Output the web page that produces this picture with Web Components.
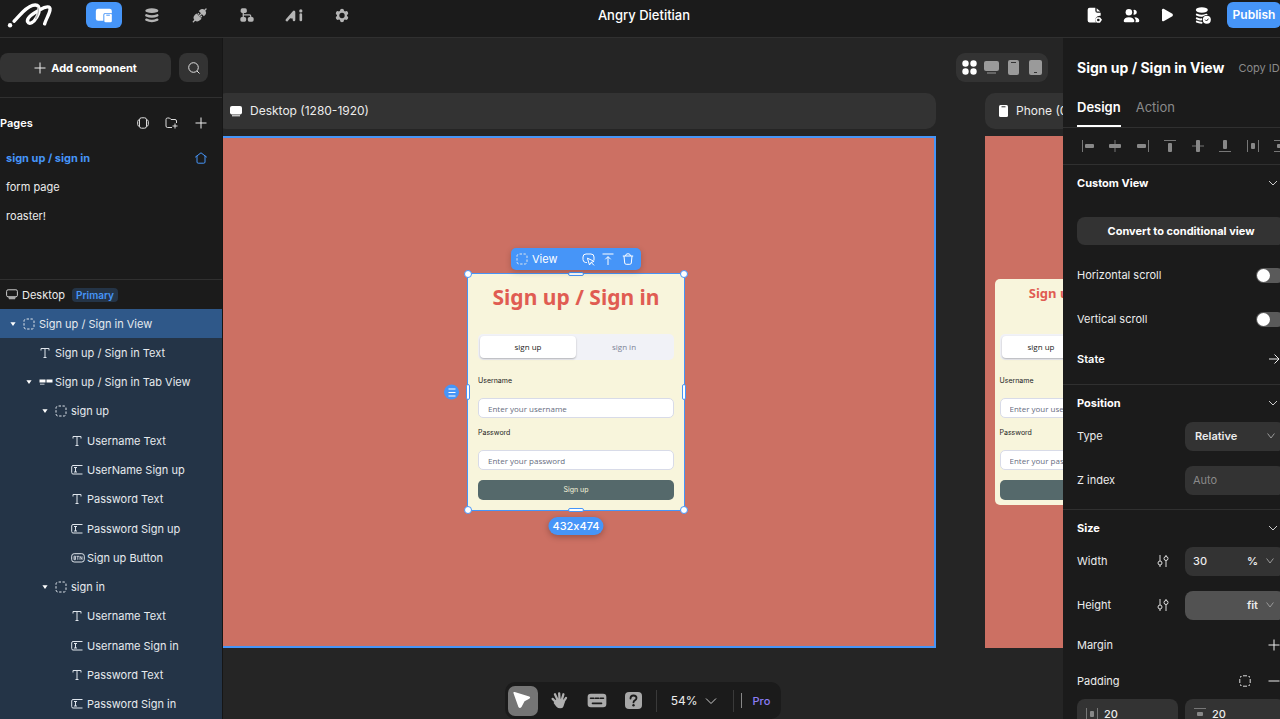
<!DOCTYPE html>
<html lang="en">
<head>
<meta charset="utf-8">
<title>Angry Dietitian</title>
<style>
  html, body { margin: 0; height: 100%; }
  body {
    overflow: hidden; background: #252525; color: #ececec;
    font: 400 11px/16px Inter, "Liberation Sans", sans-serif;
    --panel: #1b1b1b; --line: #303030; --field: #333; --accent: #4695f8;
  }
</style>
</head>
<body>
<builder-app></builder-app>
<script>
const ICONS = {
  logo: ['20 5 140 80', 47, 27, '<g fill="none" stroke="#fff" stroke-width="10" stroke-linecap="round" stroke-linejoin="round"><path d="M41 62C57 47 73 22 96 15C120 8 120 31 108 51C100 66 86 73 81 63C78 51 101 37 118 28C135 18 151 15 148 29C146 41 136 57 132 70"/></g><path d="M110 20C117 27 112 43 105 55" stroke="#bbb" stroke-width="4" fill="none"/><circle cx="29" cy="74" r="6.500" fill="#fff"/>'],
  screens: ['286 25 54 46', 18, 15, '<rect x="288" y="27" width="49" height="37" rx="7" fill="#fff"/><rect x="311" y="40" width="29" height="31" rx="6" fill="#4695f8"/><rect x="314" y="43" width="23" height="26" rx="4" fill="#fff"/><path d="M320 47h11" stroke="#4695f8" stroke-width="3"/>'],
  data: ['434 23 42 45', 14, 15, '<ellipse cx="454.500" cy="31" rx="19.500" ry="7" fill="#b4b4b4"/><path d="M438 45q16.500 7 33 0M438 58q16.500 8 33 0" stroke="#b4b4b4" stroke-width="7" stroke-linecap="round" fill="none"/>'],
  plug: ['574 23 45 45', 15, 15, '<g transform="rotate(-45 597 45)" fill="#b4b4b4"><rect x="568" y="43" width="58" height="4" rx="2"/><path d="M588 34h6v22h-6q-12 0-12-11t12-11zM604 34h3q12 0 12 11t-12 11h-3z"/><path d="M594 39h6M594 51h6" stroke="#b4b4b4" stroke-width="4"/></g>'],
  flow: ['718 24 43 43', 14, 14, '<g fill="#b4b4b4"><rect x="720" y="25" width="19" height="14" rx="5"/><rect x="719" y="52" width="18" height="14" rx="5"/><rect x="742" y="52" width="18" height="14" rx="5"/></g><path d="M728 38v15M728 45h19q4 0 4 4v5" fill="none" stroke="#b4b4b4" stroke-width="4"/>'],
  ai: ['856 25 54 40', 18, 13, '<path d="M861 59L883 34V59M875 50l8 0" fill="none" stroke="#b4b4b4" stroke-width="8" stroke-linecap="round" stroke-linejoin="round"/><path d="M904 42V59" stroke="#b4b4b4" stroke-width="8" stroke-linecap="round"/><circle cx="904" cy="31" r="5" fill="#b4b4b4"/>'],
  gear: ['1003 23 42 44', 14, 15, '<g stroke="#b4b4b4" stroke-width="12" stroke-linecap="round"><path d="M1024 31v28M1011.500 38l25 14M1011.500 52l25-14"/></g><circle cx="1024" cy="45" r="15" fill="#b4b4b4"/><circle cx="1024" cy="45" r="8" fill="#1b1b1b"/>'],
  docgear: ['440 20 48 50', 16, 17, '<path d="M448 22h17v9q0 6 6 6h10v9q-9-1-14 5-5 8 0 15h-19q-6 0-6-6V28q0-6 6-6zM469 23l11 10h-11z" fill="#fff"/><path d="M469 50h10l6 8-6 9h-10l-5-9z" fill="#fff"/><circle cx="474" cy="58.500" r="4" fill="#1b1b1b"/>'],
  users: ['545 22 52 46', 17, 15, '<g fill="#fff"><circle cx="563" cy="35" r="10"/><path d="M577 28a7.500 7.500 0 1 1 0 14q3-7 0-14zM547 62q1-12 16-12t17 12q0 4-5 4h-23q-5 0-5-4zM580 50q14 0 15 11 0 5-5 5h-7q3-9-3-16z"/></g>'],
  play: ['664 24 40 42', 13, 14, '<path d="M667 30q0-5 5-4L699 41q4 4 0 8L672 64q-5 2-5-3z" fill="#fff"/>'],
  dbcheck: ['765 18 50 51', 17, 17, '<ellipse cx="785" cy="27" rx="18" ry="8" fill="#fff"/><path d="M770 41q14 7 29 0M770 52q8 4 15 3M770 62q6 3 14 3" stroke="#fff" stroke-width="6" stroke-linecap="round" fill="none"/><circle cx="800" cy="56" r="14" fill="#1b1b1b"/><circle cx="800" cy="56" r="12" fill="#fff"/><path d="M795 56l4 4 6-7" fill="none" stroke="#1b1b1b" stroke-width="3"/>'],
  plus: ['0 0 12 12', 12, 12, '<path d="M6 .5v11M.5 6h11" stroke="#eee" fill="none"/>'],
  minus: ['0 0 12 12', 12, 12, '<path d="M.5 6h11" stroke="#eee" fill="none"/>'],
  search: ['0 0 12 12', 12, 12, '<circle cx="5.500" cy="5.500" r="4.800" fill="none" stroke="#e0e0e0"/><path d="M9 9l2.500 2.500" stroke="#e0e0e0"/>'],
  panel: ['0 0 12 12', 12, 12, '<rect x="2.500" y=".8" width="7" height="10.400" rx="2" fill="none" stroke="#ddd"/><path d="M2.500 2.500Q.7 3 .7 4.500v3q0 1.500 1.800 2M9.500 2.500q1.800.5 1.800 2v3q0 1.500-1.800 2" fill="none" stroke="#ddd"/>'],
  folder: ['0 0 13 12', 13, 12, '<path d="M7 10.500H2.500q-1.500 0-1.500-1.500V2.500Q1 1 2.500 1h2l1.500 1.500h4q1.500 0 1.500 1.500v2M10 6.500v5M7.500 9h5" fill="none" stroke="#ddd"/>'],
  home: ['0 0 12 12', 12, 12, '<path d="M.5 5L6 .8 11.500 5M2 4.200V10q0 1.200 1.200 1.200h5.600Q10 11.200 10 10V4.200" fill="none" stroke="#4695f8" stroke-linejoin="round" stroke-linecap="round"/>'],
  monitor: ['0 0 12 11', 12, 11, '<rect x=".6" y=".8" width="10.800" height="7" rx="1.500" fill="none" stroke="#ccc"/><path d="M2 7.500h8l-1 2.800H3z" fill="#aaa"/>'],
  caret: ['0 0 6 6', 6, 6, '<path d="M.4 1.200h5.200L3 5z" fill="#fff"/>'],
  view: ['0 0 12 12', 12, 12, '<rect x="1" y="1" width="10" height="10" rx="2" fill="none" stroke="#dfe5ec" stroke-dasharray="2.400 1.500" stroke-dashoffset="-.6"/>'],
  text: ['0 0 12 12', 12, 12, '<path d="M2 3.500V1.500h8v2M6 1.500v9M4.500 10.500h3" fill="none" stroke="#dfe5ec"/>'],
  tabs: ['0 0 14 12', 14, 12, '<path d="M.5 3.500h6v3h-6zM7.500 3.500h6v3h-6z" fill="#fff"/><path d="M1 8.200h4.500" stroke="#c5ccd4"/>'],
  input: ['0 0 12 12', 12, 12, '<path d="M11.500 1.500H2Q.7 1.500.7 3v5.500q0 1.500 1.300 1.500h9.500M3 3.500h3M3 8h3M4.500 3.500V8" fill="none" stroke="#dfe5ec"/>'],
  btn: ['0 0 14 12', 14, 12, '<rect x=".7" y="1.700" width="12.600" height="8.300" rx="2.500" fill="none" stroke="#dfe5ec"/><path d="M3 4.200v3.500h1.500v-3.500zM3 6h1.500M5.500 4.300h2.500M6.800 4.300v3.500M9 7.800V4.300l2 3.200V4.300" fill="none" stroke="#dfe5ec" stroke-width=".8"/>'],
  grid4: ['0 0 15 15', 15, 15, '<g fill="#fff"><circle cx="3.500" cy="3.500" r="3.200"/><circle cx="11.500" cy="3.500" r="3.200"/><circle cx="3.500" cy="11.500" r="3.200"/><circle cx="11.500" cy="11.500" r="3.200"/></g>'],
  dDesk: ['0 0 15 15', 15, 15, '<rect y="1" width="15" height="10" rx="2" fill="#9a9a9a"/><path d="M3 13h9" stroke="#777" stroke-width="1.500"/>'],
  dPhone: ['0 0 11 15', 11, 15, '<rect width="11" height="15" rx="2" fill="#9a9a9a"/><path d="M3 2.500h5" stroke="#333"/>'],
  dTab: ['0 0 13 15', 13, 15, '<rect width="13" height="15" rx="2" fill="#9a9a9a"/><path d="M5 12.500h3" stroke="#333"/>'],
  fDesk: ['0 0 12 12', 12, 12, '<rect y="1" width="12" height="8.500" rx="2" fill="#fff"/><path d="M2 10.800h8" stroke="#fff"/>'],
  fPhone: ['0 0 9 12', 9, 12, '<rect width="9" height="12" rx="1.500" fill="#fff"/><path d="M2.500 1.800h4" stroke="#333"/>'],
  chev: ['0 0 10 10', 10, 10, '<path d="M1 3l4 4 4-4" fill="none" stroke="#ccc"/>'],
  chevDim: ['0 0 8 10', 8, 10, '<path d="M.6 2.500L4 7l3.400-4.500" fill="none" stroke="#999"/>'],
  arrow: ['0 0 12 12', 12, 12, '<path d="M1 6h10M6.500 1.500L11 6l-4.500 4.500" fill="none" stroke="#eee"/>'],
  tune: ['0 0 12 12', 12, 12, '<g fill="none" stroke="#ddd"><path d="M3 0v6M3 10v2M9 0v1.500M9 5.500V12"/><circle cx="3" cy="8" r="2"/><circle cx="9" cy="3.500" r="2"/></g>'],
  corners: ['0 0 12 12', 12, 12, '<path d="M4 .8h4M4 11.200h4M.8 4v4M11.200 4v4M1.500 2.500V1.500h1M9.500 1.500h1v1M1.500 9.500v1h1M9.500 10.500h1v-1" fill="none" stroke="#ddd"/>'],
  aL: ['0 0 12 12', 12, 12, '<path d="M.5 0v12" stroke="#777"/><rect x="3" y="4" width="9" height="4" rx="1" fill="#888"/>'],
  aC: ['0 0 12 12', 12, 12, '<path d="M6 0v12" stroke="#777"/><rect x="0" y="4" width="12" height="4" rx="1" fill="#888"/>'],
  aR: ['0 0 12 12', 12, 12, '<path d="M11.500 0v12" stroke="#777"/><rect x="0" y="4" width="9" height="4" rx="1" fill="#888"/>'],
  aT: ['0 0 12 12', 12, 12, '<path d="M0 .5h12" stroke="#777"/><rect x="4" y="3" width="4" height="9" rx="1" fill="#888"/>'],
  aM: ['0 0 12 12', 12, 12, '<path d="M0 6h12" stroke="#777"/><rect x="4" y="0" width="4" height="12" rx="1" fill="#888"/>'],
  aB: ['0 0 12 12', 12, 12, '<path d="M0 11.500h12" stroke="#777"/><rect x="4" y="0" width="4" height="9" rx="1" fill="#888"/>'],
  aH: ['0 0 12 12', 12, 12, '<path d="M.5 0v12M11.500 0v12" stroke="#777"/><rect x="4" y="3" width="4" height="6" rx="1" fill="#888"/>'],
  aV: ['0 0 12 12', 12, 12, '<path d="M0 .5h12M0 11.500h12" stroke="#777"/><rect x="3" y="4" width="6" height="4" rx="1" fill="#888"/>'],
  comment: ['0 0 13 13', 13, 13, '<path d="M4.500 9.500H3.500Q1 9 1 6.500V4Q1 1 4 1h5q3 0 3 3v3M5.500 5.500l2 6.500 1.500-2.500 2.700-1zM9.200 9.500l2.600 2.600" fill="none" stroke="#fff" stroke-linejoin="round" stroke-linecap="round"/>'],
  up: ['0 0 12 12', 12, 12, '<path d="M.5 1h11M6 12V3.800M3.300 6.300L6 3.600l2.700 2.700" fill="none" stroke="#fff"/>'],
  trash: ['0 0 12 12', 12, 12, '<path d="M.8 3h10.400M3.500 3q0-2.300 2.500-2.300T8.500 3M2 3l.7 7q.2 1.300 1.500 1.300h3.600q1.300 0 1.500-1.300L10 3" fill="none" stroke="#fff"/>'],
  list: ['0 0 8 10', 8, 10, '<path d="M.5 1.500h7M.5 5h7M.5 8.500h7" stroke="#fff"/>'],
  cursor: ['72 50 56 56', 19, 19, '<path d="M73 55q0-3 4-2L120 66q5 2 0 7L106 80 97 97q-5 6-9 0z" fill="#fff"/>'],
  hand: ['182 52 52 52', 17, 17, '<g stroke="#b0b0b0" stroke-width="7" stroke-linecap="round" fill="none"><path d="M198 84L187 73M202 76L194 59M208 74L207 56M215 76L220 59M220 82L228 70"/></g><path d="M196 76q12-7 26 0l2 8-4 12q-2 6-10 6-7 0-12-6l-8-10z" fill="#b0b0b0"/>'],
  keys: ['286 54 62 46', 20, 15, '<rect x="288" y="56" width="58" height="42" rx="10" fill="#aaa"/><path d="M297 70h10M312 70h10M327 70h10M303 86h28" stroke="#1b1b1b" stroke-width="5" stroke-linecap="round"/>'],
  help: ['0 0 17 17', 17, 17, '<rect width="17" height="17" rx="4" fill="#a8a8a8"/><path d="M5.500 6.500q0-3 3-3t3 2.600q0 1.500-1.600 2.300-1.400.8-1.400 2" fill="none" stroke="#1b1b1b" stroke-width="1.800" stroke-linecap="round"/><circle cx="8.500" cy="13.300" r="1.200" fill="#1b1b1b"/>'],
  zoomchev: ['0 0 12 12', 12, 12, '<path d="M1 3.500l5 5 5-5" fill="none" stroke="#ccc"/>']
};

class BaseElement extends HTMLElement {
  connectedCallback() {
    if (this.shadowRoot) return;
    const root = this.attachShadow({ mode: 'open' });
    root.innerHTML = '<style>*{box-sizing:border-box}h1,h2,h3,p,ul,li{margin:0;padding:0;list-style:none;font-size:inherit}button,input,select{font:inherit;color:inherit;border:0;margin:0;padding:0;background:none;appearance:none;outline:0;min-width:0}button{display:flex;align-items:center;justify-content:center}a{color:inherit;text-decoration:none}</style>' + this.render();
  }
}

customElements.define('ui-icon', class extends BaseElement {
  render() {
    const [box, w, h, art] = ICONS[this.getAttribute('name')];
    return `<style>:host{display:inline-flex;flex:none}svg{display:block}</style><svg viewBox="${box}" width="${w}" height="${h}" aria-hidden="true">${art}</svg>`;
  }
});

customElements.define('top-bar', class extends BaseElement {
  render() {
    const tools = [['screens', 'Editor'], ['data', 'Data'], ['plug', 'Integrations'], ['flow', 'Actionflow'], ['ai', 'Assistant'], ['gear', 'Settings']];
    const right = [['docgear', 'Page settings'], ['users', 'Collaborators'], ['play', 'Preview'], ['dbcheck', 'Sync']];
    return `<style>
      :host{display:grid;grid-template-columns:1fr auto 1fr;width:calc(100% + 5px);height:38px;padding:2px 4px 9px 7px;background:var(--panel);border-bottom:1px solid var(--line);box-sizing:border-box}
      .left,.right{display:flex;height:26px;align-items:center}
      .right{justify-content:flex-end}
      nav{display:flex;justify-content:space-between;width:274px;margin-left:32px}
      nav button{width:36px;height:26px;border-radius:6px}
      nav button.on{background:var(--accent)}
      .right .ic{width:36px;height:26px}
      .pub{height:26px;width:54px;margin-left:6px;border-radius:6px;background:var(--accent);color:#fff;font-size:12px;font-weight:600}
      h1{font-size:13px;font-weight:500;line-height:26px;color:#fff}
    </style>
    <div class="left"><ui-icon name="logo"></ui-icon><nav>${tools.map(([n, l], i) => `<button class="${i ? '' : 'on'}" aria-label="${l}"><ui-icon name="${n}"></ui-icon></button>`).join('')}</nav></div>
    <h1>Angry Dietitian</h1>
    <div class="right">${right.map(([n, l]) => `<button class="ic" aria-label="${l}"><ui-icon name="${n}"></ui-icon></button>`).join('')}<button class="pub">Publish</button></div>`;
  }
});

customElements.define('tree-row', class extends BaseElement {
  render() {
    const level = this.getAttribute('level');
    return `<style>
      :host{display:flex;align-items:center;padding-left:calc(${level} * 16px + 10px);white-space:nowrap}
      :host([selected]){background:#2f5889}
      .caret{width:13px;display:flex}
      .kind{width:16px;display:flex}
    </style><span class="caret">${this.hasAttribute('open') ? '<ui-icon name="caret"></ui-icon>' : ''}</span><span class="kind"><ui-icon name="${this.getAttribute('icon')}"></ui-icon></span><slot></slot>`;
  }
});

customElements.define('side-panel', class extends BaseElement {
  render() {
    const rows = [[0, 'view', 'Sign up / Sign in View', 'open selected'], [1, 'text', 'Sign up / Sign in Text'], [1, 'tabs', 'Sign up / Sign in Tab View', 'open'], [2, 'view', 'sign up', 'open'], [3, 'text', 'Username Text'], [3, 'input', 'UserName Sign up'], [3, 'text', 'Password Text'], [3, 'input', 'Password Sign up'], [3, 'btn', 'Sign up Button'], [2, 'view', 'sign in', 'open'], [3, 'text', 'Username Text'], [3, 'input', 'Username Sign in'], [3, 'text', 'Password Text'], [3, 'input', 'Password Sign in']];
    return `<style>
      :host{display:flex;flex-direction:column;flex:0 0 223px;min-height:0;overflow:hidden;background:var(--panel);border-right:1px solid #161616;box-sizing:border-box}
      .add{display:flex;gap:8px;padding:15px 14px 15px 0;border-bottom:1px solid var(--line)}
      .add button{height:29px;border-radius:8px;background:var(--field)}
      .add .main{flex:1;gap:5px;font-weight:700;color:#fff}
      .add .find{width:29px}
      .pages{flex:0 0 182px;padding-top:10px;border-bottom:1px solid var(--line)}
      .head{display:flex;height:29px;align-items:center;padding-right:7px;margin-bottom:6px}
      .head h2{flex:1;font-weight:600;color:#fff}
      .head button{width:29px;height:29px}
      li a{display:flex;height:29px;align-items:center;justify-content:space-between;padding:0 15px 0 6px}
      li .on{color:var(--accent);font-weight:700}
      .device{display:flex;flex:0 0 29px;align-items:center;gap:4px;padding-left:6px}
      .tag{margin-left:3px;padding:0 4px;border-radius:4px;background:#243447;color:var(--accent);font-size:10px;font-weight:600;line-height:14px}
      .tree{display:grid;flex:1;grid-auto-rows:minmax(29px,1fr);background:#243447;color:#e6eaee}
    </style>
    <div class="add"><button class="main"><ui-icon name="plus"></ui-icon>Add component</button><button class="find" aria-label="Search"><ui-icon name="search"></ui-icon></button></div>
    <section class="pages"><div class="head"><h2>Pages</h2><button aria-label="Layouts"><ui-icon name="panel"></ui-icon></button><button aria-label="New folder"><ui-icon name="folder"></ui-icon></button><button aria-label="New page"><ui-icon name="plus"></ui-icon></button></div>
    <ul><li><a class="on" href="#signup">sign up / sign in<ui-icon name="home"></ui-icon></a></li><li><a href="#form">form page</a></li><li><a href="#roaster">roaster!</a></li></ul></section>
    <div class="device"><ui-icon name="monitor"></ui-icon>Desktop<span class="tag">Primary</span></div>
    <div class="tree">${rows.map(([l, i, t, a = '']) => `<tree-row level="${l}" icon="${i}" ${a}>${t}</tree-row>`).join('')}</div>`;
  }
});

customElements.define('signup-card', class extends BaseElement {
  render() {
    return `<style>
      :host{display:block;width:var(--card-width,216px);padding:var(--card-pad,10px);background:#f8f5dc;border-radius:var(--card-radius,0);box-sizing:border-box;font:8px/10px "Open Sans","Noto Sans",sans-serif;color:#1c1c1c}
      h2{font:700 var(--title-size,21px)/var(--title-line,26px) "Noto Sans",sans-serif;color:#e05c52;text-align:center;white-space:nowrap;margin-bottom:var(--title-gap,24px)}
      .tabs{display:flex;height:26px;padding:2px;border-radius:5px;background:#f1f2f7;margin-bottom:16px}
      .tabs button{flex:1;color:#7d8296;border-radius:4px}
      .tabs .on{background:#fff;color:#1c1c1c;box-shadow:0 1px 2px #0004}
      label{display:block;height:10px;margin-bottom:12px;font-size:7px;font-family:Inter,sans-serif}
      input{display:block;width:100%;height:20px;padding:0 9px;background:#fff;border:1px solid #d8dbe8;border-radius:5px;margin-bottom:10px;color:#666c80}
      input::placeholder{color:#666c80}
      .go{width:100%;height:20px;border-radius:5px;background:#55696b;color:#f8f5dc;font:7px/10px Inter,sans-serif}
    </style>
    <h2>Sign up / Sign in</h2>
    <div class="tabs"><button class="on">sign up</button><button>sign in</button></div>
    <label for="u">Username</label><input id="u" placeholder="Enter your username">
    <label for="p">Password</label><input id="p" placeholder="Enter your password">
    <button class="go">Sign up</button>`;
  }
});

customElements.define('selection-box', class extends BaseElement {
  render() {
    return `<style>
      :host{display:block;position:relative;outline:1px solid var(--accent)}
      i{position:absolute;box-sizing:border-box;background:#fff;border:1px solid var(--accent);transform:translate(-50%,-50%)}
      .c{width:8px;height:8px;border-radius:4px}
      .h{width:16px;height:4px;border-radius:2px}
      .v{width:4px;height:16px;border-radius:2px}
      .bar{position:absolute;bottom:calc(100% + 4px);left:50%;transform:translateX(-50%);display:flex;align-items:center;width:130px;height:22px;padding:0 3px 0 5px;border-radius:5px;background:var(--accent);color:#fff;box-shadow:0 2px 6px #0003}
      .bar span{flex:1;padding-left:4px}
      .bar button{width:20px;height:20px}
      .size{position:absolute;top:calc(100% + 7px);left:50%;transform:translateX(-50%);padding:0 4px;border-radius:9px;background:var(--accent);color:#fff;font-weight:500;line-height:18px;font-feature-settings:"calt" 0;box-shadow:0 2px 6px #0004}
      .menu{position:absolute;left:-24px;top:50%;transform:translateY(-50%);width:15px;height:15px;border-radius:50%;background:var(--accent)}
    </style><slot></slot>
    <i class="c" style="left:0;top:0"></i><i class="c" style="left:100%;top:0"></i><i class="c" style="left:0;top:100%"></i><i class="c" style="left:100%;top:100%"></i>
    <i class="h" style="left:50%;top:0"></i><i class="h" style="left:50%;top:100%"></i><i class="v" style="left:0;top:50%"></i><i class="v" style="left:100%;top:50%"></i>
    <div class="bar"><ui-icon name="view"></ui-icon><span>View</span><button aria-label="Comment"><ui-icon name="comment"></ui-icon></button><button aria-label="Select parent"><ui-icon name="up"></ui-icon></button><button aria-label="Delete"><ui-icon name="trash"></ui-icon></button></div>
    <button class="menu" aria-label="Menu"><ui-icon name="list"></ui-icon></button>
    <div class="size">432x474</div>`;
  }
});

customElements.define('art-board', class extends BaseElement {
  render() {
    return `<style>
      :host{display:flex;flex-direction:column;gap:7px;flex:0 0 var(--board-width)}
      header{display:flex;align-items:center;gap:8px;height:36px;padding:0 14px;border-radius:10px;background:var(--field);font-size:12px;white-space:nowrap}
      .page{display:flex;flex:1;align-items:center;justify-content:center;background:#cc7063;border:2px solid transparent}
      :host([active]) .page{border-color:var(--accent)}
    </style><header><ui-icon name="${this.getAttribute('icon')}"></ui-icon>${this.getAttribute('label')}</header><div class="page"><slot></slot></div>`;
  }
});

customElements.define('design-canvas', class extends BaseElement {
  render() {
    return `<style>
      :host{display:flex;flex-direction:column;flex:1;min-width:0;overflow:hidden;padding-top:15px;box-sizing:border-box}
      .devices{display:flex;align-self:flex-end;align-items:center;height:29px;margin-right:15px;padding:0 2px;border-radius:9px;background:var(--field)}
      .devices button{width:22px;height:29px}
      .boards{display:flex;flex:1;gap:49px;margin:11px 0 34px -7px}
      .desk{--board-width:720px}
      .phone{--board-width:191px;--card-width:172px;--card-pad:5px;--card-radius:5px;--title-size:13px;--title-line:18px;--title-gap:32px}
      .tools{display:flex;align-self:center;align-items:center;height:37px;padding:0 4px 0 3px;border-radius:10px;background:var(--panel)}
      .tools button{width:30px;height:30px;margin-right:7px;border-radius:7px}
      .tools .on{background:#757575}
      .sep{width:1px;height:22px;background:#3a3a3a}
      .tools .zoom{width:auto;margin:0 16px 0 14px;gap:7px;font-size:12px}
      .bar{width:1px;height:15px;background:#888;margin-left:7px}
      .pro{margin:0 7px 0 11px;color:#8d7df5;font-weight:500}
    </style>
    <div class="devices"><button aria-label="All"><ui-icon name="grid4"></ui-icon></button><button aria-label="Desktop"><ui-icon name="dDesk"></ui-icon></button><button aria-label="Phone"><ui-icon name="dPhone"></ui-icon></button><button aria-label="Tablet"><ui-icon name="dTab"></ui-icon></button></div>
    <div class="boards"><art-board class="desk" active icon="fDesk" label="Desktop (1280-1920)"><selection-box><signup-card></signup-card></selection-box></art-board>
    <art-board class="phone" icon="fPhone" label="Phone (0-767)"><signup-card></signup-card></art-board></div>
    <div class="tools"><button class="on" aria-label="Select"><ui-icon name="cursor"></ui-icon></button><button aria-label="Pan"><ui-icon name="hand"></ui-icon></button><button aria-label="Shortcuts"><ui-icon name="keys"></ui-icon></button><button aria-label="Help"><ui-icon name="help"></ui-icon></button><span class="sep"></span><button class="zoom">54%<ui-icon name="zoomchev"></ui-icon></button><span class="sep"></span><span class="bar"></span><a class="pro" href="#pro">Pro</a></div>`;
  }
});

customElements.define('inspector-panel', class extends BaseElement {
  render() {
    return `<style>
      :host{display:block;flex:0 0 217px;overflow:hidden;background:var(--panel)}
      .inner{width:236px}
      .title{display:flex;align-items:center;gap:14px;height:60px;padding:0 14px;white-space:nowrap}
      .title h2{font-size:14px;font-weight:700;color:#fff}
      .title button{color:#8a8a8a}
      .tabs{display:flex;gap:15px;height:30px;padding:0 14px;border-bottom:1px solid var(--line);font-size:13px}
      .tabs button{align-items:flex-start;padding-top:1px;height:29px;color:#8a8a8a;line-height:16px}
      .tabs .on{color:#fff;font-weight:600;border-bottom:2px solid #fff}
      .align{display:flex;height:37px;align-items:center;justify-content:space-between;padding:0 9px 0 15px;border-bottom:1px solid var(--line)}
      .align button{width:20px;height:20px}
      section{padding:0 14px;border-bottom:1px solid var(--line)}
      section:last-child{border:0}
      .row{display:flex;align-items:center}
      .row>:first-child{flex:1;font-weight:400}
      .row>h3:first-child,.row>.strong:first-child{font-weight:700;color:#fff}
      .row>.strong:first-child{font-weight:600}
      .head{height:36px;padding-right:7px;margin-bottom:-7px}
      .wide{width:100%;height:28px;margin:23px 0 8px;border-radius:8px;background:var(--field);font-weight:700;color:#fff}
      .r44{height:44px}
      .switch{width:29px;height:15px;border-radius:8px;background:#5a5a5a;padding:1px}
      .switch::before{content:"";display:block;width:13px;height:13px;border-radius:50%;background:#fff}
      .act{width:22px;height:22px}
      .r36{height:36px}
      .last{margin-bottom:7px}
      .box{display:flex;align-items:center;width:100px;height:29px;padding:0 11px 0 8px;border-radius:8px;background:var(--field);font-weight:500;box-sizing:border-box}
      .box input{flex:1;width:20px}
      .box input::placeholder{color:#8a8a8a;font-weight:400}
      .sel{padding:0 10px}
      .sel select{flex:1}
      .sel,.unit{font-weight:600}
      .unit{width:16px;margin-right:8px;text-align:right}
      .fit{background:#525252}
      .tune{width:22px;height:22px;margin-right:11px}
      .sides{margin-right:7px}
      .pair{display:grid;grid-template-columns:101px 100px;gap:7px}
      .pair .box{width:auto;gap:6px;padding-left:9px}
    </style>
    <div class="inner">
      <div class="title"><h2>Sign up / Sign in View</h2><button>Copy ID</button></div>
      <div class="tabs"><button class="on">Design</button><button>Action</button></div>
      <div class="align">${['aL', 'aC', 'aR', 'aT', 'aM', 'aB', 'aH', 'aV'].map((n, i) => `<button aria-label="Align ${i + 1}"><ui-icon name="${n}"></ui-icon></button>`).join('')}</div>
      <section>
        <div class="row head"><h3>Custom View</h3><ui-icon name="chev"></ui-icon></div>
        <button class="wide">Convert to conditional view</button>
        <div class="row r44"><label for="hs">Horizontal scroll</label><input class="switch" type="checkbox" id="hs"></div>
        <div class="row r44"><label for="vs">Vertical scroll</label><input class="switch" type="checkbox" id="vs"></div>
        <div class="row r36 last"><span class="strong">State</span><button class="act" aria-label="Open state"><ui-icon name="arrow"></ui-icon></button></div>
      </section>
      <section>
        <div class="row head"><h3>Position</h3><ui-icon name="chev"></ui-icon></div>
        <div class="row r44"><label for="ty">Type</label><div class="box sel"><select id="ty"><option>Relative</option></select><ui-icon name="chevDim"></ui-icon></div></div>
        <div class="row r44 last"><label for="zi">Z index</label><div class="box"><input id="zi" placeholder="Auto"></div></div>
      </section>
      <section>
        <div class="row head"><h3>Size</h3><ui-icon name="chev"></ui-icon></div>
        <div class="row r44"><label for="w">Width</label><button class="tune" aria-label="Width limits"><ui-icon name="tune"></ui-icon></button><div class="box"><input id="w" value="30"><select class="unit" aria-label="Width unit"><option>%</option></select><ui-icon name="chevDim"></ui-icon></div></div>
        <div class="row r44"><label for="h">Height</label><button class="tune" aria-label="Height limits"><ui-icon name="tune"></ui-icon></button><div class="box fit"><input id="h"><select class="unit" aria-label="Height unit"><option>fit</option></select><ui-icon name="chevDim"></ui-icon></div></div>
        <div class="row r36"><span>Margin</span><button class="act" aria-label="Add margin"><ui-icon name="plus"></ui-icon></button></div>
        <div class="row r36"><span>Padding</span><button class="act sides" aria-label="Each side"><ui-icon name="corners"></ui-icon></button><button class="act" aria-label="Remove padding"><ui-icon name="minus"></ui-icon></button></div>
        <div class="pair"><div class="box"><ui-icon name="aH"></ui-icon><input aria-label="Horizontal padding" value="20"></div><div class="box"><ui-icon name="aV"></ui-icon><input aria-label="Vertical padding" value="20"></div></div>
      </section>
    </div>`;
  }
});

customElements.define('builder-app', class extends BaseElement {
  render() {
    return `<style>
      :host{display:flex;flex-direction:column;height:100vh;overflow:hidden}
      top-bar{flex:none}
      main{display:flex;flex:1;min-height:0}
    </style><top-bar></top-bar><main><side-panel></side-panel><design-canvas></design-canvas><inspector-panel></inspector-panel></main>`;
  }
});
</script>
</body>
</html>
